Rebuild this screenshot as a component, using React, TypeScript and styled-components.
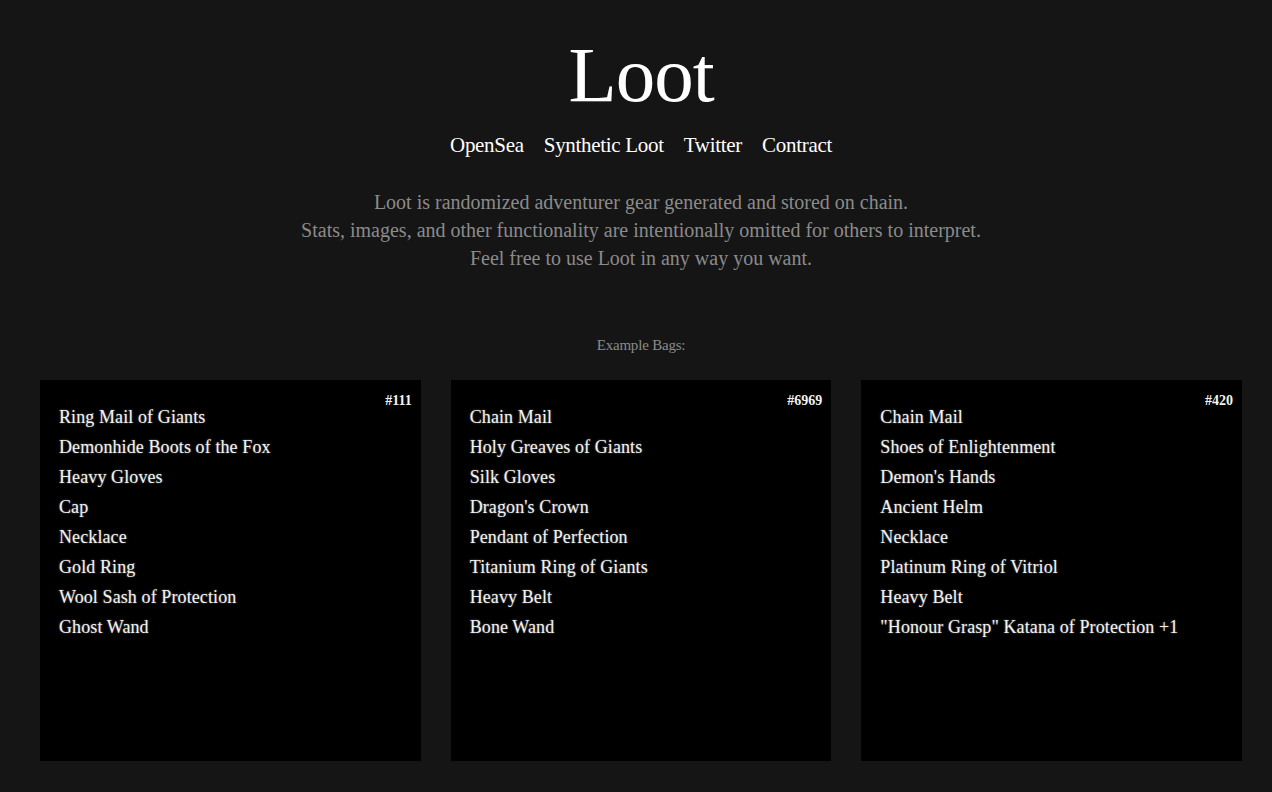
import styled, { createGlobalStyle } from "styled-components";

const GlobalStyle = createGlobalStyle`
  html, body {
    margin: 0;
    padding: 0;
    background-color: #151515;
  }
  body {
    font-family: "Liberation Serif", "DejaVu Serif", serif;
    color: #ffffff;
  }
`;

const Page = styled.div`
  min-height: 792px;
  display: flex;
  flex-direction: column;
  align-items: center;
  padding-left: 10px;
`;

const Title = styled.h1`
  margin: 30px 0 0;
  font-size: 79px;
  font-weight: 400;
  line-height: 90px;
  letter-spacing: -1px;
`;

const Nav = styled.nav`
  display: flex;
  gap: 20px;
  margin-top: 13px;
`;

const NavLink = styled.a`
  color: #ffffff;
  text-decoration: none;
  font-size: 21px;
  line-height: 24px;
  letter-spacing: -0.3px;
`;

const Description = styled.p`
  margin: 31px 0 0;
  color: #8b8b8b;
  font-size: 20px;
  line-height: 28px;
  text-align: center;
`;

const SectionLabel = styled.div`
  margin-top: 64px;
  color: #8b8b8b;
  font-size: 15px;
  line-height: 18px;
  letter-spacing: -0.2px;
`;

const Grid = styled.div`
  align-self: stretch;
  display: grid;
  grid-template-columns: repeat(3, 1fr);
  gap: 30px;
  padding: 0 30px;
  margin-top: 26px;
`;

const Bag = styled.div`
  position: relative;
  aspect-ratio: 1;
  background: #000000;
  padding: 22px 19px;
  box-sizing: border-box;
`;

const BagId = styled.span`
  position: absolute;
  top: 12px;
  right: 9px;
  font-size: 14px;
  line-height: 18px;
  font-weight: 700;
  color: #f2f2f2;
`;

const Item = styled.div`
  font-size: 18px;
  line-height: 30px;
  color: #f2f2f2;
  letter-spacing: 0.1px;
  text-shadow: 0 0 2px rgba(255, 255, 255, 0.45);
  white-space: nowrap;
`;

const bags = [
  {
    id: "#111",
    items: [
      "Ring Mail of Giants",
      "Demonhide Boots of the Fox",
      "Heavy Gloves",
      "Cap",
      "Necklace",
      "Gold Ring",
      "Wool Sash of Protection",
      "Ghost Wand",
    ],
  },
  {
    id: "#6969",
    items: [
      "Chain Mail",
      "Holy Greaves of Giants",
      "Silk Gloves",
      "Dragon's Crown",
      "Pendant of Perfection",
      "Titanium Ring of Giants",
      "Heavy Belt",
      "Bone Wand",
    ],
  },
  {
    id: "#420",
    items: [
      "Chain Mail",
      "Shoes of Enlightenment",
      "Demon's Hands",
      "Ancient Helm",
      "Necklace",
      "Platinum Ring of Vitriol",
      "Heavy Belt",
      "\"Honour Grasp\" Katana of Protection +1",
    ],
  },
];

function App() {
  return (
    <>
      <GlobalStyle />
      <Page>
        <Title>Loot</Title>
        <Nav>
          <NavLink href="#">OpenSea</NavLink>
          <NavLink href="#">Synthetic Loot</NavLink>
          <NavLink href="#">Twitter</NavLink>
          <NavLink href="#">Contract</NavLink>
        </Nav>
        <Description>
          Loot is randomized adventurer gear generated and stored on chain.
          <br />
          Stats, images, and other functionality are intentionally omitted for
          others to interpret.
          <br />
          Feel free to use Loot in any way you want.
        </Description>
        <SectionLabel>Example Bags:</SectionLabel>
        <Grid>
          {bags.map((bag) => (
            <Bag key={bag.id}>
              <BagId>{bag.id}</BagId>
              {bag.items.map((item, i) => (
                <Item key={i}>{item}</Item>
              ))}
            </Bag>
          ))}
        </Grid>
      </Page>
    </>
  );
}

export default App;
